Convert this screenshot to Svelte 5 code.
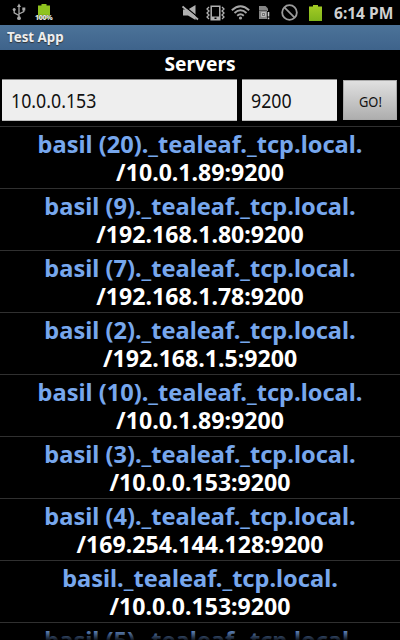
<script>
  const servers = [
    ['basil (20)._tealeaf._tcp.local.', '/10.0.1.89:9200'],
    ['basil (9)._tealeaf._tcp.local.', '/192.168.1.80:9200'],
    ['basil (7)._tealeaf._tcp.local.', '/192.168.1.78:9200'],
    ['basil (2)._tealeaf._tcp.local.', '/192.168.1.5:9200'],
    ['basil (10)._tealeaf._tcp.local.', '/10.0.1.89:9200'],
    ['basil (3)._tealeaf._tcp.local.', '/10.0.0.153:9200'],
    ['basil (4)._tealeaf._tcp.local.', '/169.254.144.128:9200'],
    ['basil._tealeaf._tcp.local.', '/10.0.0.153:9200'],
    ['basil (5)._tealeaf._tcp.local.', '']
  ];
</script>

<div class="screen">
  <header class="status">
    <svg class="usb" width="14" height="18" viewBox="0 0 14 18" fill="none" stroke="#a9a9a9" stroke-width="1.3">
      <path d="M7 3v12M7 12.5L2.2 9.8V7M7 11l4.8-2.4V6" />
      <path d="M7 .5L9 4H5z" fill="#a9a9a9" stroke="none" />
      <circle cx="2.2" cy="6.6" r="1.5" fill="#a9a9a9" stroke="none" />
      <path d="M10.3 4.5h3v3h-3z" fill="#a9a9a9" stroke="none" />
      <circle cx="7" cy="15.2" r="1.9" fill="#a9a9a9" stroke="none" />
    </svg>
    <div class="charge">
      <svg width="12" height="15" viewBox="0 0 12 15"><path d="M3.500 0h5v1.500H12V15H0V1.500h3.500z" fill="#8fc31f" /></svg>
      <span>100%</span>
    </div>
    <div class="gap"></div>
    <svg class="mute" width="17" height="16" viewBox="0 0 17 16">
      <path d="M1 4.500h5L13.500 0v15L6 10.500H1z" fill="#b0b0b0" />
      <path d="M2 .7L17 13" stroke="#000" stroke-width="1.200" />
      <path d="M.5 1.500L16 14.500" stroke="#b0b0b0" stroke-width="1.800" />
    </svg>
    <svg class="vibrate" width="19" height="16" viewBox="0 0 19 16" fill="none" stroke="#b0b0b0">
      <path d="M5.200 1.200h8.600v13.600H5.200z" stroke-width="1.500" />
      <path d="M5 11.500h9V15H5z" fill="#b0b0b0" stroke="none" />
      <path d="M8.500 12.500h2v1.500h-2z" fill="#000" stroke="none" />
      <path d="M3 2L1 4l2 2-2 2 2 2-2 2 2 2M16 2l2 2-2 2 2 2-2 2 2 2-2 2" stroke-width="1.300" />
    </svg>
    <svg class="wifi" width="19" height="15" viewBox="0 0 19 15" fill="none" stroke="#a6a6a6" stroke-width="1.900">
      <path d="M.8 5.200Q9.500-2.800 18.200 5.200M3.500 8Q9.500 2.700 15.500 8M6.200 10.700Q9.500 7.800 12.800 10.700" />
      <circle cx="9.500" cy="13" r="1.600" fill="#a6a6a6" stroke="none" />
    </svg>
    <svg class="sim" width="12" height="14" viewBox="0 0 12 14">
      <path d="M0 0h6.500l2.500 2.500V13H0z" fill="#858585" />
      <path d="M0 4.500h8" stroke="#555" />
      <path d="M2.500 6.500h4v4h-4z" fill="#777" stroke="#bbb" />
      <path d="M4 8.500h1" stroke="#ccc" />
      <path d="M8 5h4v9H8z" fill="#000" />
      <path d="M9.500 6v4.500M9.500 11.500v1.700" stroke="#ccc" stroke-width="1.600" />
    </svg>
    <svg class="block" width="17" height="17" viewBox="0 0 16 16" fill="none" stroke="#9b9b9b" stroke-width="1.700">
      <circle cx="8" cy="8" r="6.900" /><path d="M3.200 3.200l9.600 9.600" />
    </svg>
    <svg class="battery" width="13" height="16" viewBox="0 0 13 16">
      <defs><linearGradient id="cell" x2="0" y2="1"><stop stop-color="#a5cd25" /><stop offset="1" stop-color="#80b51b" /></linearGradient></defs>
      <path d="M4 0h5v1.500h4V16H0V1.500h4z" fill="url(#cell)" />
    </svg>
    <time>6:14 PM</time>
  </header>
  <div class="title"><span>Test App</span></div>
  <h1>Servers</h1>
  <div class="form">
    <div class="field host"><span>10.0.0.153</span></div>
    <div class="field port"><span>9200</span></div>
    <div class="go"><span>GO!</span></div>
  </div>
  <div class="list">
    {#each servers as [name, address]}
      <div class="row">
        <div class="name">{name}</div>
        {#if address}<div class="address">{address}</div>{/if}
      </div>
    {/each}
    <div class="fade"></div>
  </div>
</div>

<style>
  .screen { width: 400px; height: 640px; overflow: hidden; background: #000; color: #fff; font-family: "Noto Sans", "Open Sans", sans-serif; display: flex; flex-direction: column; }
  .status { height: 25px; flex: none; display: flex; align-items: flex-start; }
  .status svg { flex: none; display: block; }
  .usb { margin: 3px 0 0 12px; }
  .charge { position: relative; margin: 4px 0 0 12px; }
  .charge span { position: absolute; left: -3px; top: 9px; font-size: 7px; line-height: 9px; font-weight: 800; letter-spacing: -.3px; color: #e8e8e8; text-shadow: 0 0 1px #000; }
  .gap { flex: 1; }
  .mute { margin-top: 5px; }
  .vibrate { margin: 5px 0 0 7px; }
  .wifi { margin: 5px 0 0 6px; }
  .sim { margin: 6px 0 0 9px; }
  .block { margin: 4px 0 0 10px; }
  .battery { margin: 5px 0 0 11px; }
  time { width: 60px; margin: 1px 6px 0 12px; font-size: 16px; line-height: 24px; font-weight: 700; color: #d0d0d0; white-space: nowrap; transform: scaleX(.97); transform-origin: left; }
  .title { height: 25px; flex: none; box-sizing: border-box; padding-left: 7px; font-size: 14px; line-height: 24px; font-weight: 700; color: #eee; background: linear-gradient(#4c7399, #3e638b); text-shadow: 0 1px 1px #333; }
  .title span { display: inline-block; transform: scaleX(.95); transform-origin: left; }
  h1 { height: 29px; flex: none; margin: 0; font-size: 19px; line-height: 29px; text-align: center; transform: scaleX(1.01); }
  .form { height: 47px; flex: none; display: flex; padding-left: 2px; }
  .field { box-sizing: border-box; height: 42px; padding-left: 9px; background: #eee; border-top: 1px solid #888; border-bottom: 1px solid #bbb; color: #111; font-size: 19px; line-height: 42px; }
  .field span { display: inline-block; transform: scaleX(.935); transform-origin: left; }
  .host { width: 235px; }
  .port { width: 95px; margin-left: 5px; }
  .go { width: 54px; height: 40px; box-sizing: border-box; margin: 1px 0 0 6px; border: 1px solid #aaa; background: linear-gradient(#e0e0e0, #aeaeae); color: #111; font-size: 14px; line-height: 42px; text-align: center; }
  .go span { display: inline-block; transform: scaleX(.92); }
  .list { flex: 1; min-height: 0; overflow: hidden; position: relative; }
  .row { height: 62px; box-sizing: border-box; border-top: 1px solid #303030; padding-top: 3px; text-align: center; font-size: 24px; line-height: 28px; font-weight: 700; white-space: nowrap; }
  .name { color: #77a7ed; transform: scaleX(.983); }
  .address { transform: scaleX(.963); }
  .fade { position: absolute; left: 0; right: 0; bottom: 0; height: 12px; background: linear-gradient(transparent, #000d); }
</style>
